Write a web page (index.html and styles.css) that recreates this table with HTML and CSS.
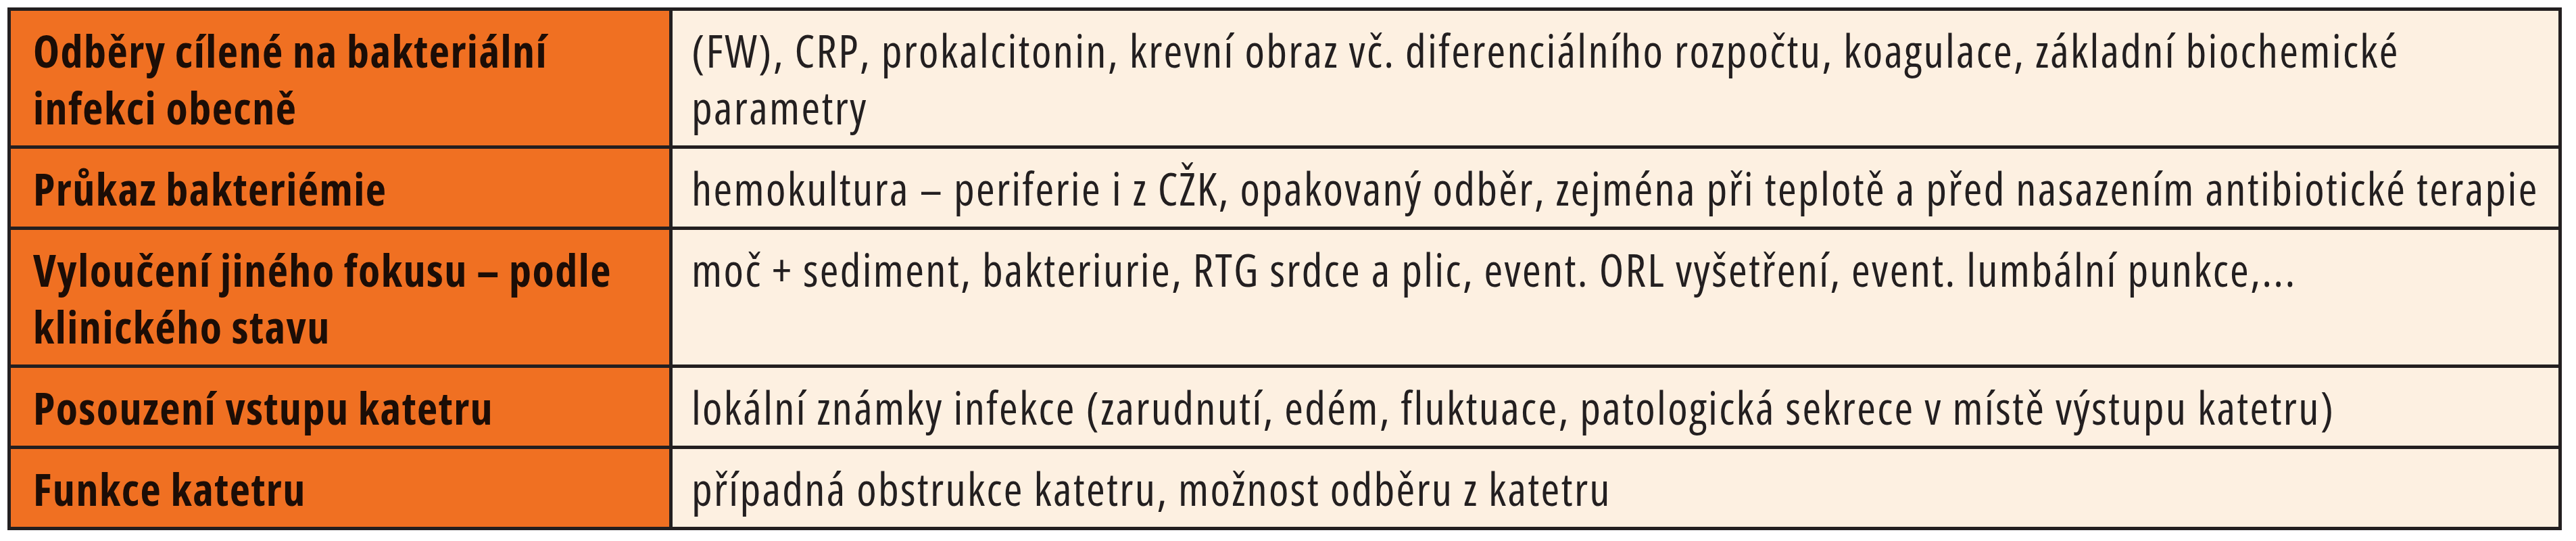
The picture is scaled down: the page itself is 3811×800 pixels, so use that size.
FILE: index.html
```html
<!DOCTYPE html>
<html lang="cs">
<head>
<meta charset="utf-8">
<title>Vyšetření při podezření na katetrovou infekci</title>
<link rel="stylesheet" href="styles.css">
</head>
<body>
<table class="exam">
  <tbody>
    <tr>
      <th>Odběry cílené na bakteriální infekci obecně</th>
      <td>(FW), CRP, prokalcitonin, krevní obraz vč. diferenciálního rozpočtu, koagulace, základní biochemické parametry</td>
    </tr>
    <tr>
      <th>Průkaz bakteriémie</th>
      <td>hemokultura – periferie i z CŽK, opakovaný odběr, zejména při teplotě a před nasazením antibiotické terapie</td>
    </tr>
    <tr>
      <th>Vyloučení jiného fokusu – podle klinického stavu</th>
      <td>moč + sediment, bakteriurie, RTG srdce a plic, event. ORL vyšetření, event. lumbální punkce,...</td>
    </tr>
    <tr>
      <th>Posouzení vstupu katetru</th>
      <td>lokální známky infekce (zarudnutí, edém, fluktuace, patologická sekrece v místě výstupu katetru)</td>
    </tr>
    <tr>
      <th>Funkce katetru</th>
      <td>případná obstrukce katetru, možnost odběru z katetru</td>
    </tr>
  </tbody>
</table>
</body>
</html>
```
FILE: styles.css
```css
html, body {
  margin: 0;
  padding: 0;
  background: #ffffff;
}

body {
  padding: 11px;
}

.exam {
  width: 3779px;
  table-layout: fixed;
  border-collapse: separate;
  border-spacing: 5px;
  background: #231f20;
  font-family: "Open Sans", "Liberation Sans", sans-serif;
  font-stretch: 75%;
}

.exam th,
.exam td {
  box-sizing: border-box;
  vertical-align: top;
  text-align: left;
  line-height: 84px;
  padding: 16px 28px 15px 28px;
  white-space: normal;
}

.exam th {
  width: 974px;
  padding-left: 33px;
  background: #f07022;
  color: #1c0d06;
  font-weight: 700;
  font-size: 66px;
  letter-spacing: 1.5px;
}

.exam td {
  background: #fdf0e1;
  color: #231f20;
  font-weight: 400;
  font-size: 67px;
  letter-spacing: 2.3px;
}
```
